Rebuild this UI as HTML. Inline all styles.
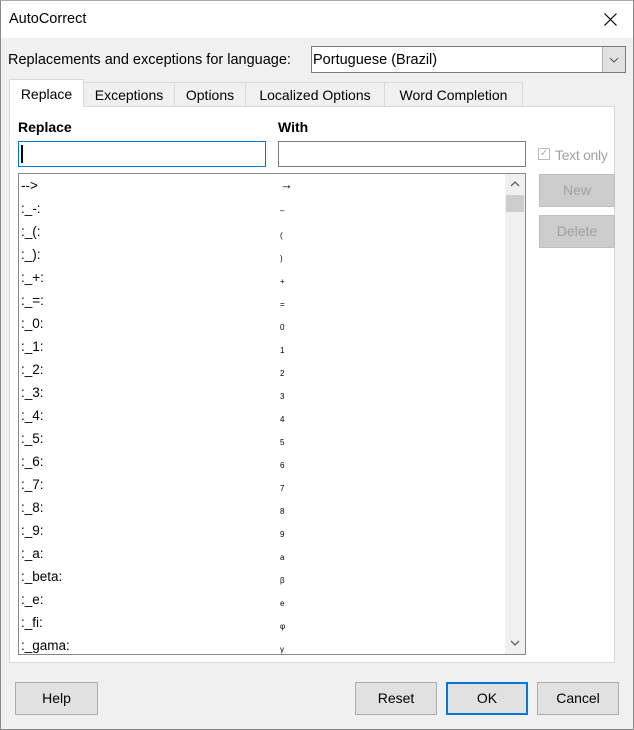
<!DOCTYPE html><html><head><style>
*{box-sizing:border-box;margin:0;padding:0}
body{width:634px;height:730px;background:#f0f0f0;font-family:"Liberation Sans",sans-serif;font-size:14px;color:#000;position:relative;overflow:hidden}
.win{position:absolute;left:0;top:0;width:634px;height:730px;border:1px solid #8a8a8a;border-top-color:#aaa}
.a{position:absolute}
.title{left:1px;top:1px;width:632px;height:37px;background:#fff}
.btn{position:absolute;background:#e1e1e1;border:1px solid #adadad;text-align:center;font-size:14px}
.dis{color:#a0a0a0;background:#ccc;border-color:#bfbfbf}
.tab{position:absolute;top:82px;height:24px;background:#f0f0f0;border:1px solid #d9d9d9;border-bottom:none;padding-top:4px;text-align:center;font-size:14px}
.row{position:absolute;left:21px;font-size:13.5px}
.w{position:absolute;left:280px;font-size:8px}
</style></head><body><div class="win"></div>
<div class="a title"></div>
<div class="a" style="left:9px;top:11px;font-size:14.5px">AutoCorrect</div>
<svg class="a" style="left:604px;top:13px" width="13" height="13"><path d="M0.5 0.5L12.5 12.5M12.5 0.5L0.5 12.5" stroke="#000" stroke-width="1.2"/></svg>
<div class="a" style="left:8px;top:52px;font-size:14.5px">Replacements and exceptions for language:</div>
<div class="a" style="left:311px;top:46px;width:315px;height:27px;background:#fff;border:1px solid #7a7a7a"></div>
<div class="a" style="left:313px;top:52px;font-size:14.5px">Portuguese (Brazil)</div>
<div class="a" style="left:602px;top:47px;width:23px;height:25px;background:#e1e1e1;border-left:1px solid #adadad"></div>
<svg class="a" style="left:609px;top:57px" width="10" height="6"><path d="M1 1L5 5L9 1" stroke="#555" fill="none"/></svg>
<div class="a" style="left:9px;top:106px;width:606px;height:557px;background:#fff;border:1px solid #d9d9d9"></div>
<div class="tab" style="left:9px;top:79px;height:28px;width:75px;background:#fff;border-color:#d9d9d9;padding-top:6px">Replace</div>
<div class="tab" style="left:83px;width:92px">Exceptions</div>
<div class="tab" style="left:174px;width:72px">Options</div>
<div class="tab" style="left:245px;width:140px">Localized Options</div>
<div class="tab" style="left:384px;width:139px">Word Completion</div>
<div class="a" style="left:18px;top:119px;font-weight:bold;font-size:14px">Replace</div>
<div class="a" style="left:278px;top:119px;font-weight:bold;font-size:14px">With</div>
<div class="a" style="left:18px;top:141px;width:248px;height:26px;background:#fff;border:1px solid #0078d7"></div>
<div class="a" style="left:21px;top:145px;width:2px;height:18px;background:#000"></div>
<div class="a" style="left:278px;top:141px;width:248px;height:26px;background:#fff;border:1px solid #7a7a7a"></div>
<div class="a" style="left:538px;top:148px;width:12px;height:12px;border:1px solid #bbb;color:#aaa;font-size:10px;line-height:10px;text-align:center">✓</div>
<div class="a" style="left:555px;top:147px;color:#a0a0a0;font-size:14px;letter-spacing:-0.3px">Text only</div>
<div class="btn dis" style="left:539px;top:174px;width:76px;height:33px;line-height:31px">New</div>
<div class="btn dis" style="left:539px;top:215px;width:76px;height:33px;line-height:31px">Delete</div>
<div class="a" style="left:18px;top:173px;width:508px;height:482px;background:#fff;border:1px solid #828790"></div>
<div class="a" style="left:505px;top:174px;width:20px;height:480px;background:#f0f0f0"></div>
<div class="a" style="left:506px;top:195px;width:18px;height:17px;background:#cdcdcd"></div>
<svg class="a" style="left:510px;top:180px" width="10" height="7"><path d="M1 6L5 2L9 6" stroke="#606060" fill="none" stroke-width="1.3"/></svg>
<svg class="a" style="left:510px;top:640px" width="10" height="7"><path d="M1 1L5 5L9 1" stroke="#606060" fill="none" stroke-width="1.3"/></svg>
<div class="row" style="top:178px">--&gt;</div><div class="w" style="top:177px;font-size:13px">→</div>
<div class="row" style="top:201px">:_-:</div><div class="w" style="top:206px">–</div>
<div class="row" style="top:224px">:_(:</div><div class="w" style="top:231px">(</div>
<div class="row" style="top:247px">:_):</div><div class="w" style="top:254px">)</div>
<div class="row" style="top:270px">:_+:</div><div class="w" style="top:277px">+</div>
<div class="row" style="top:293px">:_=:</div><div class="w" style="top:300px">=</div>
<div class="row" style="top:316px">:_0:</div><div class="w" style="top:323px">0</div>
<div class="row" style="top:339px">:_1:</div><div class="w" style="top:346px">1</div>
<div class="row" style="top:362px">:_2:</div><div class="w" style="top:369px">2</div>
<div class="row" style="top:385px">:_3:</div><div class="w" style="top:392px">3</div>
<div class="row" style="top:408px">:_4:</div><div class="w" style="top:415px">4</div>
<div class="row" style="top:431px">:_5:</div><div class="w" style="top:438px">5</div>
<div class="row" style="top:454px">:_6:</div><div class="w" style="top:461px">6</div>
<div class="row" style="top:477px">:_7:</div><div class="w" style="top:484px">7</div>
<div class="row" style="top:500px">:_8:</div><div class="w" style="top:507px">8</div>
<div class="row" style="top:523px">:_9:</div><div class="w" style="top:530px">9</div>
<div class="row" style="top:546px">:_a:</div><div class="w" style="top:553px">a</div>
<div class="row" style="top:569px">:_beta:</div><div class="w" style="top:576px">β</div>
<div class="row" style="top:592px">:_e:</div><div class="w" style="top:599px">e</div>
<div class="row" style="top:615px">:_fi:</div><div class="w" style="top:622px">φ</div>
<div class="row" style="top:638px">:_gama:</div><div class="w" style="top:645px">γ</div>
<div class="btn" style="left:15px;top:682px;width:83px;height:33px;line-height:31px">Help</div>
<div class="btn" style="left:355px;top:682px;width:82px;height:33px;line-height:31px">Reset</div>
<div class="btn" style="left:446px;top:682px;width:82px;height:33px;border:2px solid #0078d7;line-height:29px">OK</div>
<div class="btn" style="left:537px;top:682px;width:82px;height:33px;line-height:31px">Cancel</div>
</body></html>
